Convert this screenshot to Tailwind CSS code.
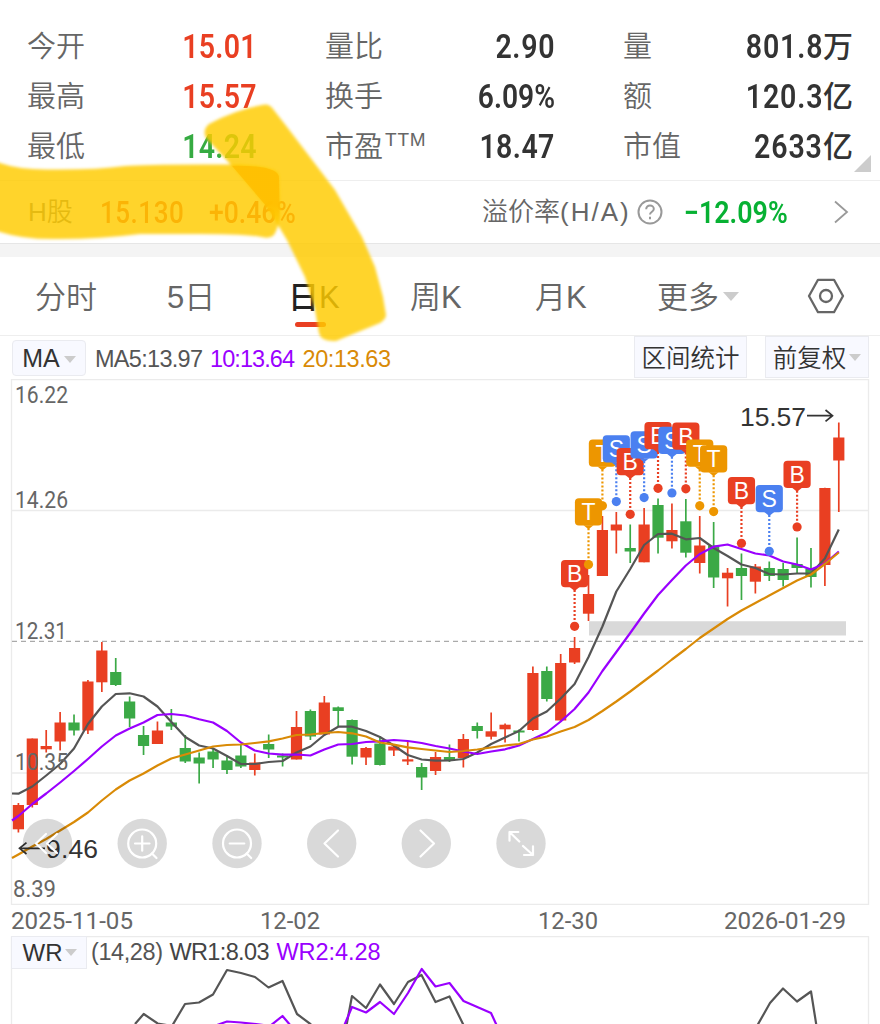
<!DOCTYPE html>
<html lang="zh-CN">
  <head>
    <meta charset="UTF-8" />
    <meta name="viewport" content="width=device-width, initial-scale=1.0" />
    <title>日K</title>
    <script src="https://cdn.jsdelivr.net/npm/@tailwindcss/browser@4"></script>
  </head>
  <body
    class="relative w-[880px] h-[1024px] overflow-hidden bg-white text-[#666] font-['Liberation_Sans','Noto_Sans_CJK_SC',sans-serif]"
  >
    <!-- Quote summary -->
    <section
      class="relative h-[181px] pt-[21px] px-7 border-b border-[#eee] grid grid-cols-[229px_229px_229px] gap-x-[69px] auto-rows-[50px] items-center text-[29px] font-['Noto_Sans_CJK_SC',sans-serif] font-[350] whitespace-nowrap"
    >
      <div class="flex justify-between items-center h-[50px]">
        <span class="-mt-[2px] -ml-px">今开</span>
        <span class="inline-block origin-right scale-x-[.84] font-['Roboto',sans-serif] text-[34px] font-semibold tracking-[.3px] text-[#e93f22]">15.01</span>
      </div>
      <div class="flex justify-between items-center h-[50px]">
        <span class="-mt-[2px] -ml-px">量比</span>
        <span class="inline-block origin-right scale-x-[.84] font-['Roboto',sans-serif] text-[34px] font-semibold tracking-[.8px] text-[#333]">2.90</span>
      </div>
      <div class="flex justify-between items-center h-[50px]">
        <span class="-mt-[2px] -ml-px">量</span>
        <span class="flex items-center text-[#333]">
          <span class="inline-block origin-right scale-x-[.84] font-['Roboto',sans-serif] text-[34px] font-semibold tracking-[1px]">801.8</span>
          <span class="-mt-[3px] text-[30px] font-medium">万</span>
        </span>
      </div>
      <div class="flex justify-between items-center h-[50px]">
        <span class="-mt-[2px] -ml-px">最高</span>
        <span class="inline-block origin-right scale-x-[.84] font-['Roboto',sans-serif] text-[34px] font-semibold tracking-[.3px] text-[#e93f22]">15.57</span>
      </div>
      <div class="flex justify-between items-center h-[50px]">
        <span class="-mt-[2px] -ml-px">换手</span>
        <span class="inline-block origin-right scale-x-[.83] font-['Roboto',sans-serif] text-[34px] font-semibold text-[#333]">6.09%</span>
      </div>
      <div class="flex justify-between items-center h-[50px]">
        <span class="-mt-[2px] -ml-px">额</span>
        <span class="flex items-center text-[#333]">
          <span class="inline-block origin-right scale-x-[.84] font-['Roboto',sans-serif] text-[34px] font-semibold tracking-[1px]">120.3</span>
          <span class="-mt-[3px] text-[30px] font-medium">亿</span>
        </span>
      </div>
      <div class="flex justify-between items-center h-[50px]">
        <span class="-mt-[2px] -ml-px">最低</span>
        <span class="inline-block origin-right scale-x-[.84] font-['Roboto',sans-serif] text-[34px] font-semibold tracking-[.3px] text-[#36ab42]">14.24</span>
      </div>
      <div class="flex justify-between items-center h-[50px]">
        <span class="-mt-[2px] -ml-px flex items-center">市盈<span class="ml-[2px] mb-[11px] text-[19px] leading-5 tracking-[.8px] font-['Liberation_Sans',sans-serif]">TTM</span></span>
        <span class="inline-block origin-right scale-x-[.84] font-['Roboto',sans-serif] text-[34px] font-semibold tracking-[.5px] text-[#333]">18.47</span>
      </div>
      <div class="flex justify-between items-center h-[50px]">
        <span class="-mt-[2px] -ml-px">市值</span>
        <span class="flex items-center text-[#333]">
          <span class="inline-block origin-right scale-x-[.84] font-['Roboto',sans-serif] text-[34px] font-semibold tracking-[1px]">2633</span>
          <span class="-mt-[3px] text-[30px] font-medium">亿</span>
        </span>
      </div>
      <svg class="absolute left-[854px] top-[155px]" width="17" height="17" viewBox="0 0 17 17">
        <path d="M17 0V17H0Z" fill="#ccc" />
      </svg>
    </section>

    <!-- H share row -->
    <section class="h-[62px] pl-7 flex items-center whitespace-nowrap font-['Liberation_Sans','Noto_Sans_CJK_SC',sans-serif] font-[350] text-[26px]">
      <span class="w-[72px]">H股</span>
      <span class="w-[109px] mt-[2px]">
        <span class="inline-block origin-left scale-x-[.84] font-['Roboto',sans-serif] text-[31px] font-medium tracking-[.6px] text-[#e93f22]">15.130</span>
      </span>
      <span class="w-[273px] mt-[2px]">
        <span class="inline-block origin-left scale-x-[.855] font-['Roboto',sans-serif] text-[31px] font-medium text-[#e93f22]">+0.46%</span>
      </span>
      <span class="w-[154px]">
        <span class="inline-block">溢价率<span class="tracking-[2px]">(H/A)</span></span>
      </span>
      <svg width="28" height="28" viewBox="0 0 28 28" fill="none" stroke="#999" stroke-width="2">
        <circle cx="14" cy="14" r="11.5" />
        <path d="M10.2 11.2c0-2.3 1.7-3.6 3.8-3.6s3.8 1.4 3.8 3.4c0 2.6-3.8 2.9-3.8 5.6" />
        <path d="M14 18.8v2.4" />
      </svg>
      <span class="ml-5 w-[149px] mt-[2px]">
        <span class="inline-block origin-left scale-x-[.865] font-['Roboto',sans-serif] text-[31px] font-semibold text-[#07b133]">−12.09%</span>
      </span>
      <svg width="16" height="24" viewBox="0 0 16 24" fill="none" stroke="#999" stroke-width="1.8">
        <path d="M2 1.5L14 12L2 22.5" />
      </svg>
    </section>
    <div class="h-[14px] bg-[#f4f4f4] border-t border-[#e6e6e6]"></div>

    <!-- Period tabs -->
    <nav class="relative h-[79px] border-b border-[#eee] flex items-center pl-[35px] text-[31px] font-['Liberation_Sans','Noto_Sans_CJK_SC',sans-serif] font-[350] whitespace-nowrap">
      <span class="mt-1 w-[132px]">分时</span>
      <span class="mt-1 w-[121px]">5日</span>
      <span class="mt-1 w-[122px] text-[#222] font-medium">日K</span>
      <span class="mt-1 w-[125px]">周K</span>
      <span class="mt-1 w-[122px]">月K</span>
      <span class="mt-1">更多</span>
      <svg class="ml-[4px]" width="16" height="9" viewBox="0 0 16 9"><path d="M0 0H16L8 9Z" fill="#ccc" /></svg>
      <svg class="ml-[68px]" width="38" height="36" viewBox="0 0 38 36" fill="none" stroke="#666" stroke-width="2.3">
        <path d="M11 1.8H27L36 18L27 34.2H11L2 18Z" stroke-linejoin="round" />
        <circle cx="19" cy="18" r="6" />
      </svg>
      <span class="absolute left-[295px] top-[65px] w-[31px] h-[5px] rounded-full bg-[#e93f22]"></span>
    </nav>

    <!-- MA toolbar -->
    <div class="h-[43px] flex items-start pl-3 whitespace-nowrap text-[23.5px]">
      <div class="mt-1 w-[74px] h-9 pt-[2px] flex items-center justify-center gap-1 rounded-sm bg-[#f8f9ff] border border-[#eaebf0] text-[25px] text-[#333]">
        MA
        <svg width="12" height="7" viewBox="0 0 12 7"><path d="M0 0H12L6 7Z" fill="#ccc" /></svg>
      </div>
      <svg class="h-[43px] w-[320px]" viewBox="86 336 320 43" font-size="23.5">
        <text x="95" y="366.5" fill="#555" textLength="108">MA5:13.97</text>
        <text x="210" y="366.5" fill="#9a00ff" textLength="85">10:13.64</text>
        <text x="302.500" y="366.5" fill="#d98a06" textLength="88.500">20:13.63</text>
      </svg>
      <div class="ml-[228px] w-[113px] h-[42px] flex items-center justify-center bg-[#f8f9ff] border border-[#eaebf0] text-[24.5px] font-['Noto_Sans_CJK_SC',sans-serif] font-[350] text-[#333]">区间统计</div>
      <div class="ml-[18px] w-[104px] h-[42px] flex items-center justify-center gap-[3px] bg-[#f8f9ff] border border-[#eaebf0] text-[24.5px] font-['Noto_Sans_CJK_SC',sans-serif] font-[350] text-[#333]">
        前复权
        <svg width="12" height="7" viewBox="0 0 12 7"><path d="M0 0H12L6 7Z" fill="#ccc" /></svg>
      </div>
    </div>

    <!-- Candlestick chart -->
    <svg class="block w-[880px] h-[557px]" viewBox="0 379 880 557">
      <g fill="none" stroke="#ebebeb" stroke-width="1.3">
        <path d="M11.500 379.500H868.500V904.300H11.500Z" />
        <path d="M12 510.500H868M12 773H868" />
      </g>
      <path d="M12 641.300H866" stroke="#aaa" stroke-width="1.3" stroke-dasharray="5 4" />
      <path d="M589 621.300H846V635.500H589Z" fill="#d9d9d9" />
      <g id="candles"></g>
      <g fill="none" stroke-width="2.2" stroke-linejoin="round">
        <polyline id="ma5" stroke="#555" />
        <polyline id="ma10" stroke="#9a00ff" />
        <polyline id="ma20" stroke="#d98a06" />
      </g>
      <g id="marks" font-size="23" text-anchor="middle"></g>
      <g font-family="Roboto, sans-serif" font-size="24.5" fill="#666">
        <text x="15" y="403" textLength="53" lengthAdjust="spacingAndGlyphs">16.22</text>
        <text x="15" y="508" textLength="53" lengthAdjust="spacingAndGlyphs">14.26</text>
        <text x="15" y="639" textLength="52" lengthAdjust="spacingAndGlyphs">12.31</text>
        <text x="15" y="770" textLength="53" lengthAdjust="spacingAndGlyphs">10.35</text>
        <text x="13" y="897" textLength="43" lengthAdjust="spacingAndGlyphs">8.39</text>
        <text x="11" y="929" textLength="122" lengthAdjust="spacingAndGlyphs">2025-11-05</text>
        <text x="260" y="929" textLength="60" lengthAdjust="spacingAndGlyphs">12-02</text>
        <text x="538" y="929" textLength="60" lengthAdjust="spacingAndGlyphs">12-30</text>
        <text x="724" y="929" textLength="122" lengthAdjust="spacingAndGlyphs">2026-01-29</text>
      </g>
      <g font-size="26.500" fill="#333">
        <text x="740" y="426" textLength="66">15.57</text>
        <text x="46" y="858" textLength="52">9.46</text>
      </g>
      <g fill="none" stroke="#333" stroke-width="1.7">
        <path d="M807 415.700H832M825.500 410L832.500 415.700L825.500 421.400" />
        <path d="M45 848.300H20M26.500 842.600L19.500 848.300L26.500 854" />
      </g>
      <!-- chart controls -->
      <g fill="#000" fill-opacity=".15">
        <circle cx="47.500" cy="843.500" r="24.700" />
        <circle cx="142.200" cy="843.500" r="24.700" />
        <circle cx="237" cy="843.500" r="24.700" />
        <circle cx="331.700" cy="843.500" r="24.700" />
        <circle cx="426.300" cy="843.500" r="24.700" />
        <circle cx="521" cy="843.500" r="24.700" />
      </g>
      <g fill="none" stroke="#fff" stroke-width="2.2" stroke-linecap="round" stroke-linejoin="round">
        <path d="M46 834L36 843.500L46 853M57 834L47 843.500L57 853" />
        <circle cx="142.200" cy="843.500" r="14" />
        <path d="M135 843.500H149.500M142.200 836.300V850.700M152 853.500L156.500 858" />
        <circle cx="237" cy="843.500" r="14" />
        <path d="M229.700 843.500H244.300M246.700 853.500L251.200 858" />
        <path d="M338 830.500L324.500 843.500L338 856.500" />
        <path d="M420.500 830.500L434 843.500L420.500 856.500" />
        <path d="M519.300 841.500L509.500 832M509.500 840.700V832H518.300M523 846L533 855M533 846.300V855H524" />
      </g>
    </svg>

    <!-- WR indicator -->
    <section class="relative h-[88px]">
      <svg class="block w-[880px] h-[88px]" viewBox="0 936 880 88" fill="none" stroke-width="2.2" stroke-linejoin="round">
        <path d="M11.500 1030V936.500H868.500V1030" stroke="#ebebeb" stroke-width="1.3" />
        <g stroke="#555">
          <polyline points="135,1024 143.700,1014 157.700,1023.500 172,1026 185,1004 199,1002.500 213,994.500 227,970 241,973 255,977 268.500,987.500 282.500,981 297,1014 311,1024.500" />
          <polyline points="346,1028 352,996 366,1008 380,984.500 394,1004 408,982 421.500,975 435.500,1002 449.500,996.500 463.500,1025" />
          <polyline points="757,1026 770,1003 783,988.500 797,1001.500 811,991.500 816.500,1026" />
        </g>
        <g stroke="#9a00ff">
          <polyline points="217,1025 227,1021.500 241,1022.500 256,1024 270,1026 282.500,1016 291,1026" />
          <polyline points="344,1026 352,1007 366,1012.500 380,1002 394,1014 408,993 421.700,969 435.500,986.500 449.500,983 463.500,1001 491,1013 497,1026" />
        </g>
        <g stroke="none" font-size="23.5">
          <text x="91" y="960" fill="#555" textLength="72">(14,28)</text>
          <text x="169.500" y="960" fill="#444" textLength="100">WR1:8.03</text>
          <text x="276.500" y="960" fill="#9a00ff" textLength="104">WR2:4.28</text>
        </g>
      </svg>
      <div class="absolute left-[11px] top-0 w-[76px] h-[33px] pl-[2px] flex items-center justify-center gap-[3px] bg-[#f8f9ff] border border-[#eaebf0] text-[24px] text-[#333]">
        WR
        <svg width="12" height="7" viewBox="0 0 12 7"><path d="M0 0H12L6 7Z" fill="#ccc" /></svg>
      </div>
    </section>

    <!-- Highlighter strokes -->
    <svg class="absolute left-0 top-0 pointer-events-none" width="880" height="400" viewBox="0 0 880 400">
      <defs>
        <filter id="soft" x="-10%" y="-10%" width="120%" height="120%"><feGaussianBlur stdDeviation="1.8" /></filter>
        <clipPath id="band">
          <path d="M206 138Q202 130 209 124Q235 110 262 105Q269 103 273 109L287 127L335 190L362 237L375 267L383 297L386 315Q386 319 380 323L336 341Q321 342 319 333L315 310L305 277L287 240L267 207L233 167Z" />
        </clipPath>
        <linearGradient id="fade" x1="0" y1="0" x2="0" y2="1">
          <stop offset="0" stop-color="#ffbc00" stop-opacity=".75" />
          <stop offset=".55" stop-color="#ffbc00" stop-opacity=".75" />
          <stop offset=".8" stop-color="#ffbc00" stop-opacity="0" />
        </linearGradient>
      </defs>
      <g fill="#ffcb00" fill-opacity=".83" filter="url(#soft)">
        <path d="M-8 160L0 163Q20 170 50 169.500Q95 170 125 166Q145 164 240 164.500Q279 167 279 176L280 210Q280 225 274 235Q270 239 262 237Q245 234 200 234H140Q100 239 60 239Q25 240 0 232L-8 229Z" />
        <path d="M206 138Q202 130 209 124Q235 110 262 105Q269 103 273 109L287 127L335 190L362 237L375 267L383 297L386 315Q386 319 380 323L336 341Q321 342 319 333L315 310L305 277L287 240L267 207L233 167Z" />
      </g>
      <path d="M225 166Q279 164 279 178L280 236H225Z" fill="url(#fade)" clip-path="url(#band)" />
    </svg>

    <script>
      const x = (i) => 18.4 + i * 13.905;
      const red = "#e93f22";
      const green = "#3ba946";
      const blue = "#4b80f0";
      const orange = "#ed9600";

      // up/down, high, body top, body bottom, low
      const candles = [
        [1, 803, 805, 829.3, 832.5], [1, 738.5, 738.5, 805, 807.5], [1, 730, 746, 749.3, 752.5],
        [1, 712, 722.5, 741.5, 750.5], [0, 714.5, 722.5, 730.5, 735.5], [1, 680, 681.5, 730.5, 734],
        [1, 642, 650.5, 682.3, 692], [0, 658, 672, 685, 686], [0, 696.5, 701.5, 718.5, 727],
        [0, 726, 735, 746, 755], [1, 721.5, 730.5, 744, 744], [0, 709, 722.5, 726.5, 730],
        [0, 735, 748, 761.5, 763], [0, 752.5, 757.5, 763.5, 783.5], [0, 748.5, 751.5, 759.5, 768],
        [0, 755, 760.5, 770, 774], [0, 745, 755.5, 766.5, 768], [1, 753.5, 762.5, 770, 775.5],
        [0, 734.5, 744, 749.5, 758], [0, 753.5, 755.5, 757.5, 766.5], [1, 711, 727, 759.5, 759.5],
        [0, 709.5, 711, 736.5, 740], [1, 696, 702.5, 734.5, 734.5], [0, 706.5, 707.3, 711, 727],
        [0, 719.5, 720, 756.7, 764.5], [1, 747, 748, 757.5, 765], [0, 736, 743.5, 765, 765.5],
        [1, 745, 746.5, 750.5, 756], [1, 741, 759.3, 761.5, 765], [0, 763, 767, 777.5, 790],
        [1, 752, 757, 771, 775], [0, 744.5, 757, 760.3, 762], [1, 734, 739, 758, 767.5],
        [0, 722.5, 726, 731, 738.5], [1, 712.5, 731.3, 736.7, 739.5], [1, 723.5, 724.7, 729.3, 742.5],
        [0, 729.5, 730.5, 732.5, 741.5], [1, 666.5, 673, 730, 731], [0, 666.5, 671, 699, 701.5],
        [1, 654, 663, 720.5, 721.5], [1, 637, 648, 662.5, 664], [1, 575, 594, 613.7, 621],
        [1, 516, 530, 576, 576], [1, 512, 524.5, 530.5, 553.5], [0, 524.5, 548, 551.5, 563],
        [1, 508, 524.5, 562.3, 562.3], [0, 498.5, 505, 537.7, 553.5], [1, 503.5, 530, 541.3, 548.5],
        [0, 499, 521.3, 552.7, 557.5], [1, 516, 545.5, 563, 573.5], [0, 522, 545.5, 577.5, 588],
        [1, 568, 572.7, 578.3, 606.5], [0, 553.5, 568, 576, 600], [1, 564, 566.5, 581.7, 593.5],
        [0, 561.5, 568, 576, 581], [0, 563, 569, 580, 586.5], [0, 537.5, 564, 568, 573.5],
        [0, 548, 568.5, 577, 587.5], [1, 487.7, 488, 565, 586], [1, 422.5, 437.5, 460.5, 512],
      ];
      document.getElementById("candles").innerHTML = candles
        .map(([up, high, top, bottom, low], i) => {
          const color = up ? red : green;
          return `<path d="M${x(i)} ${high}V${low}" stroke="${color}" stroke-width="1.7"/>
            <rect x="${x(i) - 5.6}" y="${top}" width="11.2" height="${bottom - top}" fill="${color}"/>`;
        })
        .join("");

      const averages = {
        ma5: [793.5, [793.7, 786.5, 775.5, 764, 748.5, 724, 706.5, 694, 693.3, 696.5, 706.5, 722, 737, 745.5, 748.5, 756, 764, 764, 762, 761, 752.5, 746.5, 735, 726.7, 726.7, 731, 737, 745.5, 755, 759.5, 760.7, 760.5, 759, 752.5, 744, 737.5, 731, 718.5, 711.5, 698.5, 684, 657, 626.5, 591.5, 569, 545, 534, 533.7, 539.3, 538, 548, 556, 564.5, 568, 574, 574.5, 573.5, 573.5, 558.5, 529.5]],
        ma10: [820.5, [816, 804, 793.5, 782.5, 771, 759, 746.5, 735.5, 728.5, 722.5, 715, 714, 715.5, 719.3, 722.5, 731, 742.5, 750.5, 753.5, 754.7, 754.5, 755.5, 749.5, 744.5, 744, 742, 741.3, 740, 741, 743, 746, 748.5, 751.5, 754, 751.5, 749.3, 745.5, 739, 732.5, 721.5, 709, 692.5, 671, 652, 633, 613.5, 595, 580, 565.5, 554, 546.7, 544.5, 549, 553.5, 555.5, 561.5, 564.5, 569.5, 563.5, 551.5]],
        ma20: [858, [854.5, 846.5, 839, 830.5, 822, 812.5, 800.5, 789.5, 780.5, 773.5, 765.5, 758.5, 754.5, 750.5, 746.5, 745, 744.5, 743, 741.3, 738.5, 735, 734.5, 733, 732, 733.3, 736.5, 742.5, 744.7, 747.3, 749, 750.5, 752, 751, 749.5, 747.5, 745.5, 744, 739.5, 736.5, 731.5, 727, 720, 711, 701.5, 691.5, 681, 670.5, 659.5, 649, 638, 628.5, 619, 610.5, 603, 595.5, 588, 580.5, 574.5, 564, 552.5]],
      };
      for (const id in averages) {
        const [start, values] = averages[id];
        document
          .getElementById(id)
          .setAttribute("points", `12,${start} ` + values.map((y, i) => `${x(i)},${y}`).join(" "));
      }

      // trade marks: candle index, letter, badge top
      const marks = [
        [40, "B", 560], [41, "T", 498.3], [42, "T", 439.5], [43, "S", 435.3], [44, "B", 448],
        [45, "S", 431.3], [46, "B", 422], [47, "S", 426.7], [48, "B", 422.5], [49, "T", 439.5],
        [50, "T", 445.3], [52, "B", 477], [54, "S", 485], [56, "B", 460.7],
      ];
      const fills = { B: red, S: blue, T: orange };
      document.getElementById("marks").innerHTML = marks
        .map(([i, letter, y]) => {
          const c = fills[letter];
          return `<path d="M${x(i)} ${y + 30}V${y + 63}" stroke="${c}" stroke-width="2.2" stroke-dasharray="2 2"/>
            <circle cx="${x(i)}" cy="${y + 66.3}" r="4.6" fill="${c}"/>
            <rect x="${x(i) - 13.6}" y="${y}" width="27.200" height="27.200" rx="4" fill="${c}"/>
            <path d="M${x(i) - 5} ${y + 27}h10l-5 4z" fill="${c}"/>
            <text x="${x(i)}" y="${y + 22}" fill="#fff">${letter}</text>`;
        })
        .join("");
    </script>
  </body>
</html>
